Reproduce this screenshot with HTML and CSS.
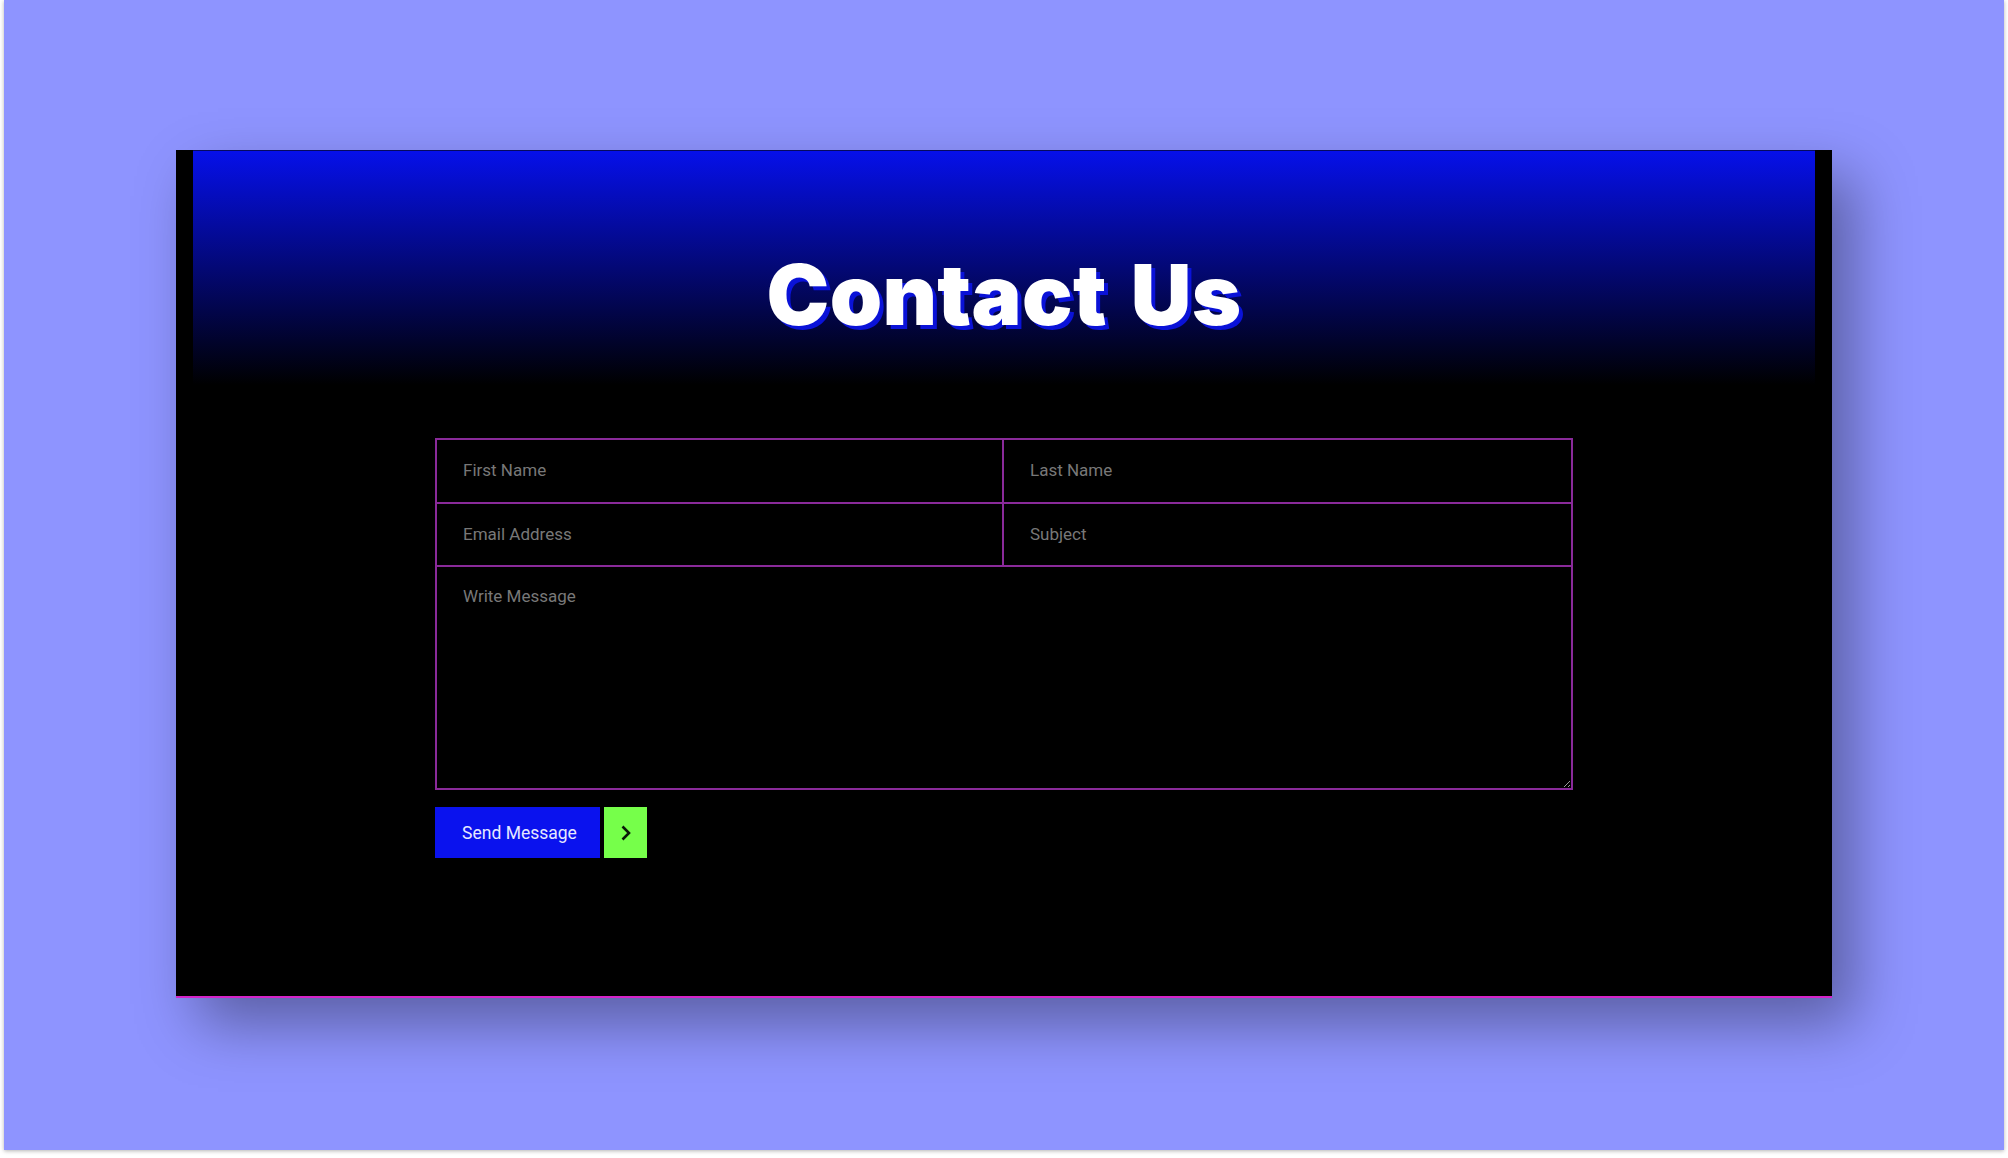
FILE: index.html
```html
<!DOCTYPE html>
<html lang="en">
<head>
    <meta charset="UTF-8">
    <meta name="viewport" content="width=device-width, initial-scale=1.0">
    <title>Contact Us</title>
    <link rel="stylesheet" href="styles.css">
</head>
<body>

    <div class="page">
        <section class="contact-card">
            <header class="contact-header">
                <h1>Contact Us</h1>
            </header>

            <form class="contact-form">
                <div class="field-grid">
                    <input type="text" placeholder="First Name">
                    <input type="text" placeholder="Last Name">
                    <input type="email" placeholder="Email Address">
                    <input type="text" placeholder="Subject">
                    <textarea placeholder="Write Message"></textarea>
                </div>

                <div class="form-actions">
                    <button type="submit" class="send-btn">Send Message</button>
                    <span class="send-arrow">
                        <svg width="14" height="16" viewBox="0 0 14 16" fill="none">
                            <path d="M3.5 1.5 L10 8 L3.5 14.5" stroke="#0a1a08" stroke-width="2.6"/>
                        </svg>
                    </span>
                </div>
            </form>
        </section>
    </div>

</body>
</html>
```

FILE: styles.css
```css
* {
    margin: 0;
    padding: 0;
    box-sizing: border-box;
}

body {
    background: #fff;
    font-family: 'Roboto', sans-serif;
    height: 1158px;
    overflow: hidden;
}

.page {
    width: 2000px;
    height: 1150px;
    margin-left: 4px;
    padding: 150px 172px 0;
    background: #8e94ff;
    box-shadow: 0 1px 4px rgba(0, 0, 0, 0.3);
}

.contact-card {
    height: 848px;
    padding: 0 17px;
    background: #000;
    border-bottom: 2px solid #d424c8;
    box-shadow: 22px 26px 56px rgba(0, 0, 0, 0.36);
}

.contact-header {
    height: 235px;
    padding-top: 94px;
    background: linear-gradient(to bottom, #0610ea, #000);
    border-top: 1px solid #050a60;
    text-align: center;
}

.contact-header h1 {
    font-family: 'Inter', sans-serif;
    font-weight: 900;
    font-size: 84px;
    line-height: 100px;
    letter-spacing: 0.3px;
    word-spacing: 7px;
    color: #fff;
    text-shadow: 4px 4px 0 #0a12d8;
}

.contact-form {
    width: 1138px;
    margin: 53px auto 0;
}

.field-grid {
    display: grid;
    grid-template-columns: 567px 1fr;
    border-top: 2px solid #8a2a9a;
    border-left: 2px solid #8a2a9a;
}

.field-grid input,
.field-grid textarea {
    background: #000;
    color: #fff;
    font-family: inherit;
    font-size: 17px;
    border: none;
    border-right: 2px solid #8a2a9a;
    border-bottom: 2px solid #8a2a9a;
    outline: none;
    padding: 0 26px;
}

.field-grid input {
    height: 63.5px;
    padding-bottom: 1px;
}

.field-grid textarea {
    grid-column: 1 / 3;
    height: 223px;
    padding-top: 19px;
    resize: vertical;
}

.field-grid input::placeholder,
.field-grid textarea::placeholder {
    color: #787878;
    opacity: 1;
}

.form-actions {
    display: flex;
    gap: 4px;
    margin-top: 17px;
}

.send-btn {
    width: 165px;
    height: 51px;
    padding-left: 4px;
    background: #0a12ee;
    color: #e6e8ff;
    font-family: inherit;
    font-size: 17.5px;
    border: none;
    cursor: pointer;
}

.send-arrow {
    width: 43px;
    height: 51px;
    background: #76ff4a;
    display: flex;
    align-items: center;
    justify-content: center;
}
```
